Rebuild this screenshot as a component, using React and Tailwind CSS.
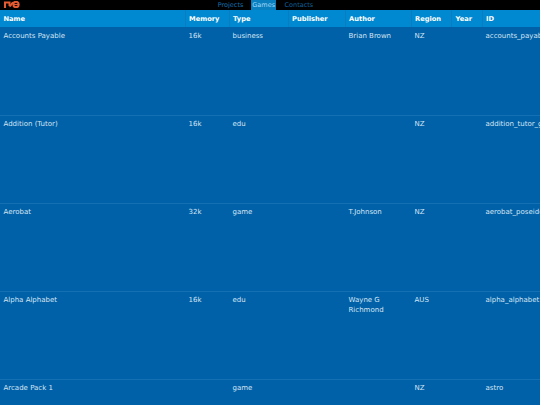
const cols = [
  ["Name", "w-[185px]"],
  ["Memory", "w-[44px]"],
  ["Type", "w-[59px]"],
  ["Publisher", "w-[57px]"],
  ["Author", "w-[66px]"],
  ["Region", "w-[40.5px]"],
  ["Year", "w-[30.5px]"],
  ["ID", "w-[58px]"],
];

const rows = [
  ["Accounts Payable", "16k", "business", "", "Brian Brown", "NZ", "", "accounts_payable"],
  ["Addition (Tutor)", "16k", "edu", "", "", "NZ", "", "addition_tutor_g"],
  ["Aerobat", "32k", "game", "", "T.Johnson", "NZ", "", "aerobat_poseidon"],
  ["Alpha Alphabet", "16k", "edu", "", "Wayne G Richmond", "AUS", "", "alpha_alphabet"],
  ["Arcade Pack 1", "", "game", "", "", "NZ", "", "astro"],
];

export default function App() {
  return (
    <div className="w-[540px] h-[405px] overflow-hidden bg-[#0060a8] font-['DejaVu_Sans',sans-serif] text-[7px] leading-[10px] text-[#d5e6f3] [text-rendering:geometricPrecision]">
      <nav className="h-[10px] bg-black flex relative">
        <svg className="absolute left-[4px] top-[1px]" width="16" height="7" viewBox="0 0 16 7" fill="none" stroke="#e65c32" strokeWidth="2">
          <path d="M1 7V1.5H5.5V5" />
          <path d="M5.5 5.2C7 5.2 7.3 1.6 9.5 1.6" />
          <circle cx="12" cy="3.5" r="2.7" />
          <path d="M9.5 3.5H14.5" strokeWidth="1.2" />
        </svg>
        <div className="ml-[217.7px] flex h-[10px] leading-[10px] text-[6.5px]">
          <a className="text-[#1273b5]">Projects</a>
          <a className="ml-[8px] px-[1px] bg-[#0a7fbf] text-[#a0d8f8]">Games</a>
          <a className="ml-[8.5px] text-[#0f609c]">Contacts</a>
        </div>
      </nav>
      <table className="table-fixed border-collapse w-[540px]">
        <thead>
          <tr className="h-[17px] bg-[#0088d0]">
            {cols.map(([label, w]) => (
              <th key={label} className={`${w} px-[3.5px] py-0 text-left text-[6.7px] font-bold text-white border-l border-[#0a7cc0] first:border-l-0 whitespace-nowrap overflow-hidden`}>
                {label}
              </th>
            ))}
          </tr>
        </thead>
        <tbody>
          {rows.map((row) => (
            <tr key={row[0]} className="h-[88px] border-b border-[#1470b4]">
              {row.map((cell, i) => (
                <td key={i} className={`px-[3.5px] pt-[3.5px] pb-0 align-top ${i === 7 ? "whitespace-nowrap overflow-hidden" : ""}`}>
                  {cell}
                </td>
              ))}
            </tr>
          ))}
        </tbody>
      </table>
    </div>
  );
}
